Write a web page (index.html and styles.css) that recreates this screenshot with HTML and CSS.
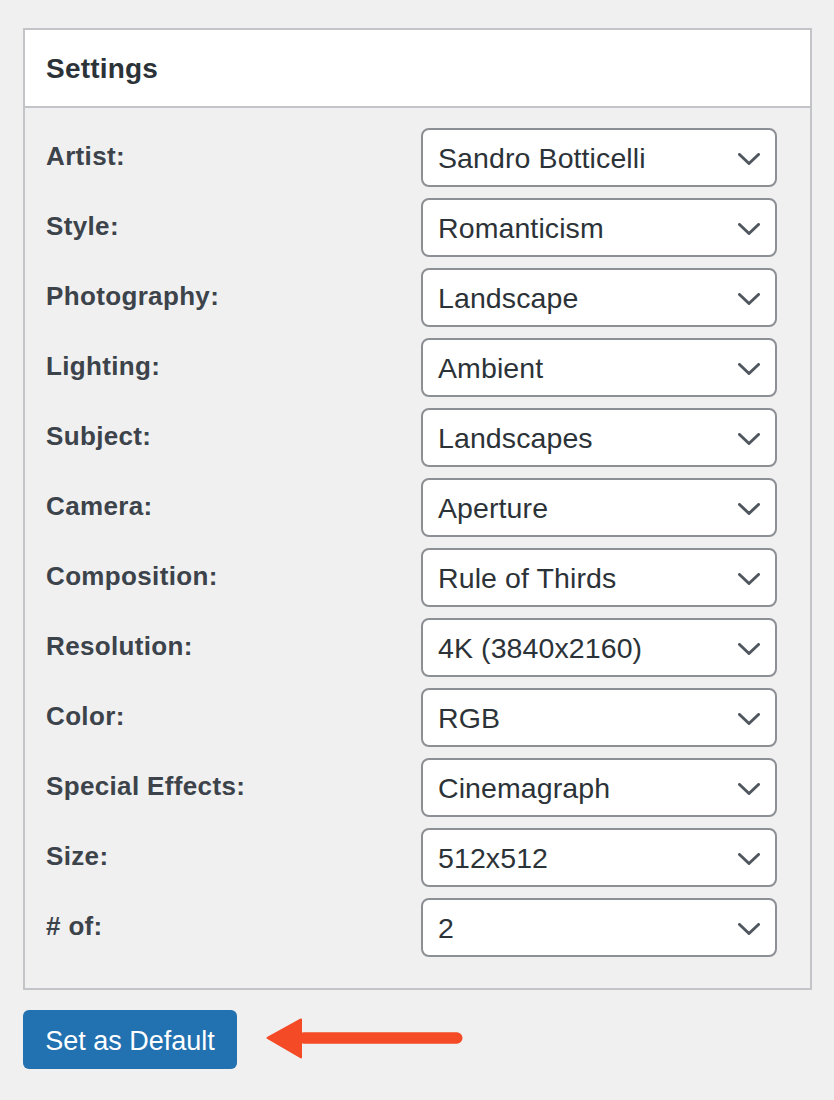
FILE: index.html
```html
<!DOCTYPE html>
<html lang="en">
<head>
<meta charset="utf-8">
<title>Settings</title>
<link rel="stylesheet" href="styles.css">
</head>
<body>
<div class="panel">
  <div class="panel-head"><h2 class="panel-title">Settings</h2></div>
  <div class="panel-body">
    <div class="row"><span class="label">Artist:</span><div class="select"><span class="value">Sandro Botticelli</span><svg class="chev" viewBox="0 0 22 12"><path d="M1.5 1.5 L11 10.5 L20.5 1.5"/></svg></div></div>
    <div class="row"><span class="label">Style:</span><div class="select"><span class="value">Romanticism</span><svg class="chev" viewBox="0 0 22 12"><path d="M1.5 1.5 L11 10.5 L20.5 1.5"/></svg></div></div>
    <div class="row"><span class="label">Photography:</span><div class="select"><span class="value">Landscape</span><svg class="chev" viewBox="0 0 22 12"><path d="M1.5 1.5 L11 10.5 L20.5 1.5"/></svg></div></div>
    <div class="row"><span class="label">Lighting:</span><div class="select"><span class="value">Ambient</span><svg class="chev" viewBox="0 0 22 12"><path d="M1.5 1.5 L11 10.5 L20.5 1.5"/></svg></div></div>
    <div class="row"><span class="label">Subject:</span><div class="select"><span class="value">Landscapes</span><svg class="chev" viewBox="0 0 22 12"><path d="M1.5 1.5 L11 10.5 L20.5 1.5"/></svg></div></div>
    <div class="row"><span class="label">Camera:</span><div class="select"><span class="value">Aperture</span><svg class="chev" viewBox="0 0 22 12"><path d="M1.5 1.5 L11 10.5 L20.5 1.5"/></svg></div></div>
    <div class="row"><span class="label">Composition:</span><div class="select"><span class="value">Rule of Thirds</span><svg class="chev" viewBox="0 0 22 12"><path d="M1.5 1.5 L11 10.5 L20.5 1.5"/></svg></div></div>
    <div class="row"><span class="label">Resolution:</span><div class="select"><span class="value">4K (3840x2160)</span><svg class="chev" viewBox="0 0 22 12"><path d="M1.5 1.5 L11 10.5 L20.5 1.5"/></svg></div></div>
    <div class="row"><span class="label">Color:</span><div class="select"><span class="value">RGB</span><svg class="chev" viewBox="0 0 22 12"><path d="M1.5 1.5 L11 10.5 L20.5 1.5"/></svg></div></div>
    <div class="row"><span class="label">Special Effects:</span><div class="select"><span class="value">Cinemagraph</span><svg class="chev" viewBox="0 0 22 12"><path d="M1.5 1.5 L11 10.5 L20.5 1.5"/></svg></div></div>
    <div class="row"><span class="label">Size:</span><div class="select"><span class="value">512x512</span><svg class="chev" viewBox="0 0 22 12"><path d="M1.5 1.5 L11 10.5 L20.5 1.5"/></svg></div></div>
    <div class="row"><span class="label"># of:</span><div class="select"><span class="value">2</span><svg class="chev" viewBox="0 0 22 12"><path d="M1.5 1.5 L11 10.5 L20.5 1.5"/></svg></div></div>
  </div>
</div>
<div class="actions">
  <button class="btn" type="button">Set as Default</button>
  <svg class="arrow" viewBox="0 0 202 48" width="202" height="48">
    <polygon points="3.5,22 37,3.5 37,41.5" fill="#f44a26" stroke="#f44a26" stroke-width="2" stroke-linejoin="round"/>
    <rect x="34" y="16.2" width="164.5" height="11.5" rx="5.75" fill="#f44a26"/>
  </svg>
</div>
</body>
</html>
```

FILE: styles.css
```css
* { box-sizing: border-box; }

body {
  margin: 0;
  background: #f0f0f1;
  font-family: "Liberation Sans", Arial, sans-serif;
  color: #3c434a;
}

.panel {
  margin: 28px 0 0 23px;
  width: 789px;
  border: 2px solid #c3c4c7;
}

.panel-head {
  background: #fff;
  height: 78px;
  border-bottom: 2px solid #c3c4c7;
  display: flex;
  align-items: center;
  padding: 2px 21px 0;
}

.panel-title {
  margin: 0;
  font-size: 28px;
  font-weight: bold;
  letter-spacing: 0.2px;
  color: #2c3338;
}

.panel-body {
  padding: 20px 33px 31px 21px;
  display: flex;
  flex-direction: column;
  gap: 11px;
}

.row {
  display: flex;
  align-items: center;
  justify-content: space-between;
}

.label {
  font-size: 26px;
  font-weight: bold;
  letter-spacing: 0.35px;
  color: #3c434a;
  padding-bottom: 3px;
}

.select {
  width: 356px;
  height: 59px;
  background: #fff;
  border: 2px solid #8c8f94;
  border-radius: 8px;
  display: flex;
  align-items: center;
  justify-content: space-between;
  padding: 2px 15px 0 15px;
}

.value {
  font-size: 28.5px;
  letter-spacing: 0.1px;
  color: #2c3338;
}

.chev {
  width: 22px;
  height: 12px;
  fill: none;
  stroke: #50575e;
  stroke-width: 3;
  stroke-linecap: round;
  stroke-linejoin: round;
}

.actions {
  display: flex;
  align-items: center;
  margin: 20px 0 0 23px;
  gap: 27px;
}

.btn {
  width: 214px;
  height: 59px;
  background: #2271b1;
  color: #fff;
  border: none;
  border-radius: 6px;
  font-family: "Liberation Sans", Arial, sans-serif;
  font-size: 27px;
  padding: 3px 0 0 0;
  cursor: pointer;
}

.arrow {
  display: block;
}
```
